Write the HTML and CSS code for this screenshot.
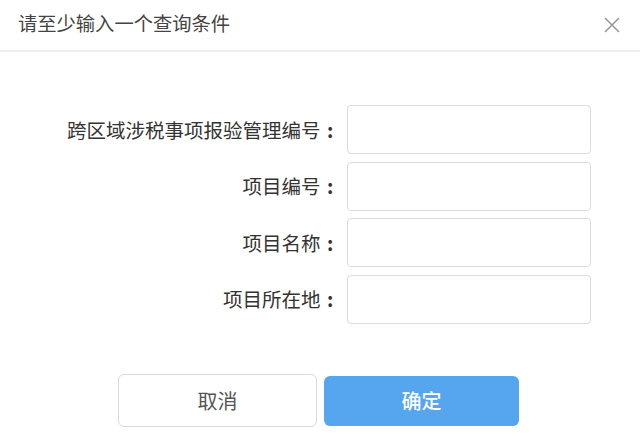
FILE: index.html
```html
<!DOCTYPE html>
<html lang="zh-CN">
<head>
<meta charset="utf-8">
<title>查询条件</title>
<link rel="stylesheet" href="styles.css">
</head>
<body>
<div class="dialog">
  <div class="header">
    <span class="title">请至少输入一个查询条件</span>
    <span class="close" aria-label="关闭">
      <svg width="16" height="16" viewBox="0 0 16 16"><path d="M1 1L15 15M15 1L1 15" stroke="#9a9a9a" stroke-width="1.6" fill="none"/></svg>
    </span>
  </div>
  <div class="body">
    <div class="row"><label class="label">跨区域涉税事项报验管理编号<span class="colon">:</span></label><input class="field" type="text"></div>
    <div class="row"><label class="label">项目编号<span class="colon">:</span></label><input class="field" type="text"></div>
    <div class="row"><label class="label">项目名称<span class="colon">:</span></label><input class="field" type="text"></div>
    <div class="row"><label class="label">项目所在地<span class="colon">:</span></label><input class="field" type="text"></div>
  </div>
  <div class="footer">
    <button class="btn btn-cancel" type="button">取消</button>
    <button class="btn btn-ok" type="button">确定</button>
  </div>
</div>
</body>
</html>
```
FILE: styles.css
```css
html, body {
  margin: 0;
  padding: 0;
  background: #ffffff;
}
body {
  width: 640px;
  height: 444px;
  overflow: hidden;
  font-family: "Noto Sans CJK SC", "Microsoft YaHei", sans-serif;
  color: #333333;
}
.dialog {
  display: flex;
  flex-direction: column;
  height: 444px;
}
.header {
  height: 50px;
  border-bottom: 2px solid #eeeeee;
  display: flex;
  align-items: center;
  justify-content: space-between;
  padding: 0 20px 0 18px;
}
.title {
  font-size: 19.3px;
  color: #444444;
  line-height: 1;
  margin-top: -2px;
}
.close {
  display: flex;
  width: 16px;
  height: 16px;
  margin-top: 0;
}
.body {
  display: flex;
  flex-direction: column;
  gap: 7.5px;
  padding-top: 53px;
}
.row {
  display: flex;
  align-items: center;
  height: 49px;
}
.label {
  width: 340px;
  text-align: right;
  font-size: 19.5px;
  line-height: 1;
  color: #333333;
  white-space: nowrap;
}
.colon {
  display: inline-block;
  width: 1em;
  text-align: center;
  font-weight: 700;
}
.field {
  box-sizing: border-box;
  margin: 0 0 0 7px;
  width: 244px;
  height: 49px;
  border: 1.5px solid #dcdcdc;
  border-radius: 4px;
  background: #ffffff;
  outline: none;
}
.footer {
  display: flex;
  align-items: center;
  gap: 7px;
  padding-left: 118px;
  margin-top: 50.5px;
}
.btn {
  box-sizing: border-box;
  font-family: "Noto Sans CJK SC", "Microsoft YaHei", sans-serif;
  font-size: 20px;
  line-height: 1;
  padding: 0;
  border-radius: 6px;
  cursor: pointer;
}
.btn-cancel {
  width: 199px;
  height: 53px;
  border: 1.5px solid #d9d9d9;
  background: #ffffff;
  color: #555555;
}
.btn-ok {
  width: 195px;
  height: 50px;
  border: none;
  background: #55a6ee;
  color: #ffffff;
  font-weight: 500;
}
```
